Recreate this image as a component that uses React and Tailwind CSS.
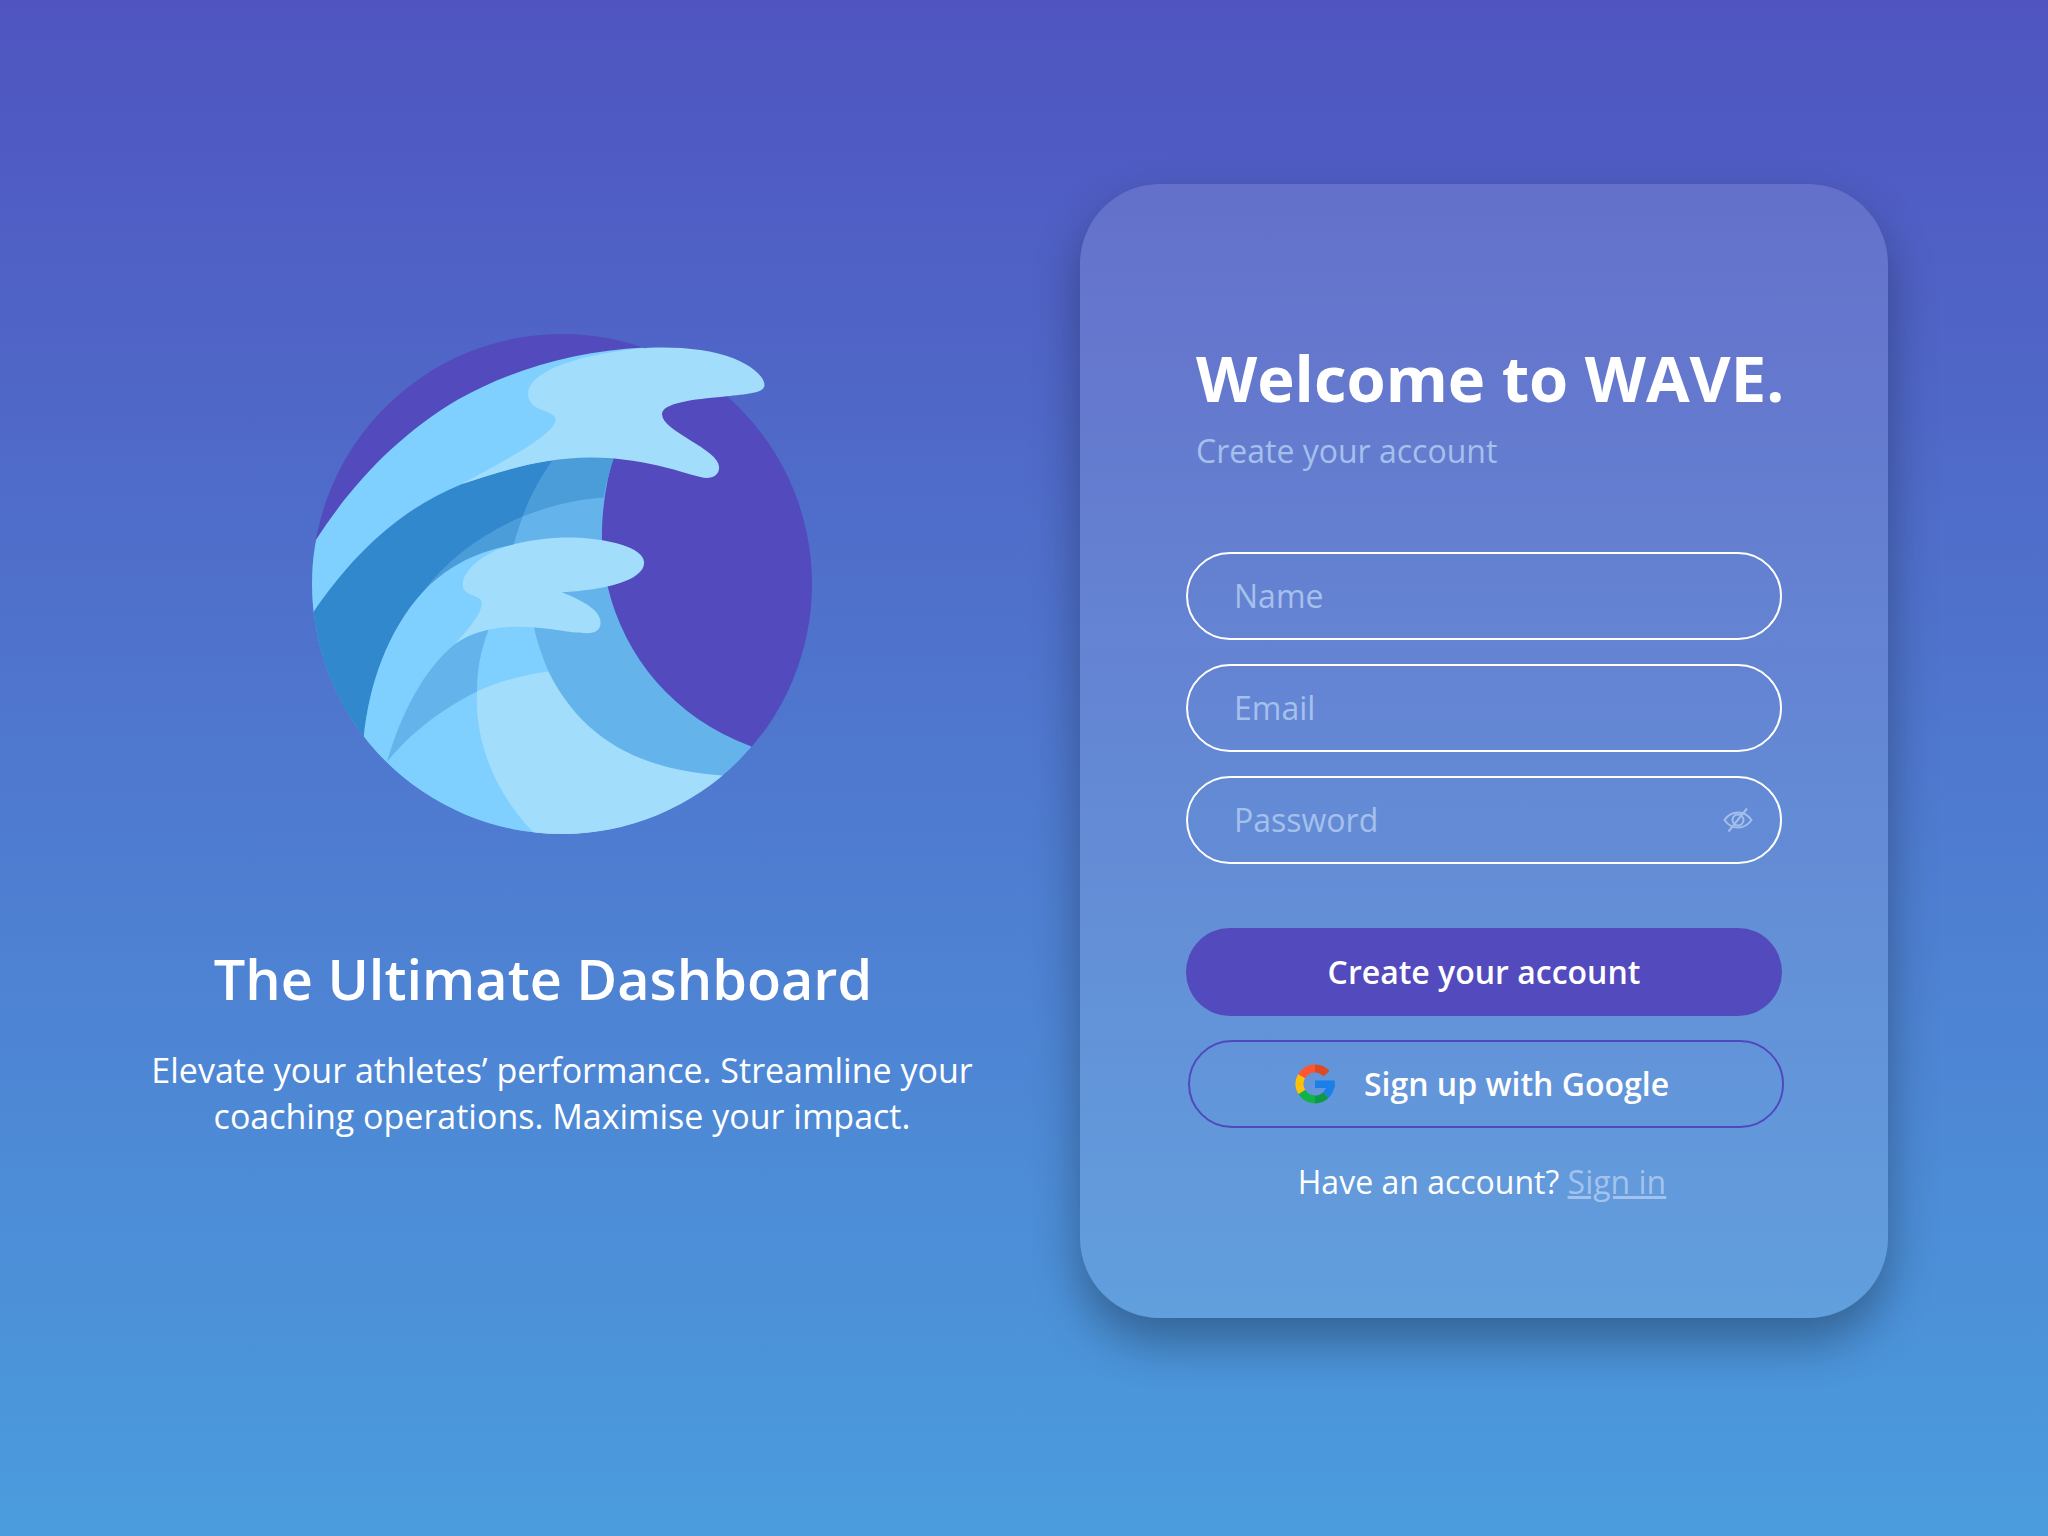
const font = { fontFamily: '"Open Sans", sans-serif' };

function arc(r, a0, a1) {
  const p = (a) => [20 + r * Math.cos((a * Math.PI) / 180), 20 + r * Math.sin((a * Math.PI) / 180)];
  const [x0, y0] = p(a0);
  const [x1, y1] = p(a1);
  const large = Math.abs(a1 - a0) > 180 ? 1 : 0;
  return `M${x0} ${y0}A${r} ${r} 0 ${large} ${a1 > a0 ? 1 : 0} ${x1} ${y1}`;
}

function GoogleIcon() {
  const seg = [
    ["#DB4A25", -42, -90],
    ["#FF5630", -90, -150],
    ["#FFC107", -150, -212],
    ["#12B24B", -212, -270],
    ["#0E9A44", -270, -315],
    ["#1B7FE8", -315, -360],
  ];
  return (
    <svg width="40" height="40" viewBox="0 0 40 40" fill="none">
      {seg.map(([c, a, b]) => (
        <path key={c} d={arc(15.5, a, b)} stroke={c} strokeWidth="8" />
      ))}
      <path d="M20 16.5H39.5C39.8 18 40 19 40 20.5C40 21.5 39.8 23 39.5 24H20Z" fill="#1B7FE8" />
    </svg>
  );
}

function EyeOff() {
  return (
    <svg width="30" height="26" viewBox="0 0 30 26" fill="none" stroke="#A3C0EC" strokeWidth="2">
      <path d="M1.5 13C5 8 10 5.5 15 5.5S25 8 28.5 13C25 18 20 20.5 15 20.5S5 18 1.5 13Z" />
      <circle cx="15" cy="13" r="5.5" />
      <path d="M24 1.5L5.5 24.5" />
    </svg>
  );
}

function WaveLogo() {
  return (
    <svg width="500" height="500" viewBox="90 67 1400 1400" className="overflow-visible">
      <defs>
        <clipPath id="globe">
          <circle cx="790" cy="767" r="700" />
        </clipPath>
      </defs>
      <circle cx="790" cy="767" r="700" fill="#534ABD" />
      <g clipPath="url(#globe)">
        <path d="M940 390C912 480 900 570 902 650L918 775C965 970 1100 1140 1320 1222L1400 1500H60V700L500 400L770 380Z" fill="#64B3EB" />
        <path d="M765 400H940C920 460 912 490 907 525C820 532 750 550 680 578C560 630 470 700 400 790L600 700L655 655C665 620 672 600 680 578C700 525 725 475 765 420Z" fill="#4A9DD9" />
        <path d="M60 700L500 400L770 380L765 420C725 475 700 525 680 578C560 630 470 700 400 790C300 900 250 1050 235 1195L60 1300Z" fill="#3288CC" />
        <path d="M235 1195C250 1050 300 900 400 790C460 725 540 680 640 660L712 890C720 930 735 970 752 1012L900 1500H200Z" fill="#7FCFFF" />
        <path d="M300 1265C340 1130 400 1010 490 935C520 915 555 900 585 893C560 960 552 1010 552 1068C450 1120 370 1180 300 1265Z" fill="#64B3EB" />
        <path d="M752 1012C680 1022 610 1040 552 1068C545 1220 610 1360 710 1462L800 1500H1240V1303C1050 1290 860 1230 752 1012Z" fill="#A2DDFB" />
        <path d="M100 645C200 490 330 350 500 250C650 165 830 115 1020 105L900 300L765 420C680 432 600 458 510 487C330 560 200 690 93 847L60 800Z" fill="#7FCFFF" />
      </g>
      <path d="M490 935C530 890 565 850 565 820C565 795 512 805 512 768C512 730 570 680 640 660C700 642 770 636 820 637C920 640 1020 665 1020 707C1020 760 900 785 790 790C850 815 898 840 898 875C898 895 885 905 860 905C810 905 750 887 660 887C590 887 530 905 490 935Z" fill="#A2DDFB" />
      <path d="M510 487C600 435 775 350 772 305C770 280 695 285 695 235C695 180 800 130 1000 108C1080 100 1200 105 1270 135C1330 160 1357 190 1357 210C1357 235 1300 235 1240 243C1160 250 1070 260 1070 292C1070 340 1230 390 1230 440C1230 460 1215 470 1195 470C1160 470 1040 413 870 413C740 413 620 450 510 487Z" fill="#A2DDFB" />
    </svg>
  );
}

function Field({ placeholder, type = "text", children }) {
  return (
    <div className="relative">
      <input
        type={type}
        placeholder={placeholder}
        className="block w-full h-[88px] rounded-[44px] border-2 border-white bg-transparent pl-[46px] pr-[80px] pb-[1px] text-[32px] font-normal text-white placeholder:text-[#A5C0EC] outline-none"
        style={font}
      />
      {children}
    </div>
  );
}

export default function App() {
  return (
    <div
      className="flex w-[2048px] h-[1536px] overflow-hidden pt-[184px] text-white bg-gradient-to-b from-[#4F54C0] to-[#4A9CDD]"
      style={font}
    >
      <div className="ml-[50px] w-[1024px] pt-[150px] flex flex-col items-center">
        <WaveLogo />
        <h2 className="mr-[38px] mt-[106px] text-[55.8px] leading-[76px] font-semibold">The Ultimate Dashboard</h2>
        <p className="mt-[31px] text-[34px] leading-[46px] text-center font-normal w-[860px]">
          Elevate your athletes’ performance. Streamline your coaching operations. Maximise your impact.
        </p>
      </div>
      <div className="ml-[6px] w-[808px] h-[1134px] rounded-[80px] bg-white/12 shadow-[0_24px_48px_rgba(0,0,0,0.32)] pl-[106px] pr-[106px] pt-[156px]">
        <div className="pl-[10px]">
          <h1 className="text-[63.3px] leading-[76px] font-bold whitespace-nowrap">Welcome to WAVE.</h1>
          <p className="mt-[13px] text-[32px] leading-[44px] font-normal text-[#A5C0EC]">Create your account</p>
        </div>
        <div className="mt-[79px] flex flex-col gap-[24px]">
          <Field placeholder="Name" />
          <Field placeholder="Email" type="email" />
          <Field placeholder="Password" type="password">
            <div className="absolute right-[29px] top-[31px]">
              <EyeOff />
            </div>
          </Field>
        </div>
        <button className="mt-[64px] block w-full h-[88px] rounded-[44px] bg-[#534ABD] text-[32px] font-semibold text-white">
          Create your account
        </button>
        <button className="mt-[24px] ml-[2px] pr-[8px] flex items-center justify-center gap-[29px] w-[596px] h-[88px] rounded-[44px] border-2 border-[#5049BE] text-[32px] font-semibold text-white">
          <GoogleIcon />
          <span>Sign up with Google</span>
        </button>
        <p className="mt-[32px] mr-[4px] text-center text-[32px] leading-[44px] font-normal">
          Have an account? <a className="text-[#A3C3EE] underline">Sign in</a>
        </p>
      </div>
    </div>
  );
}
